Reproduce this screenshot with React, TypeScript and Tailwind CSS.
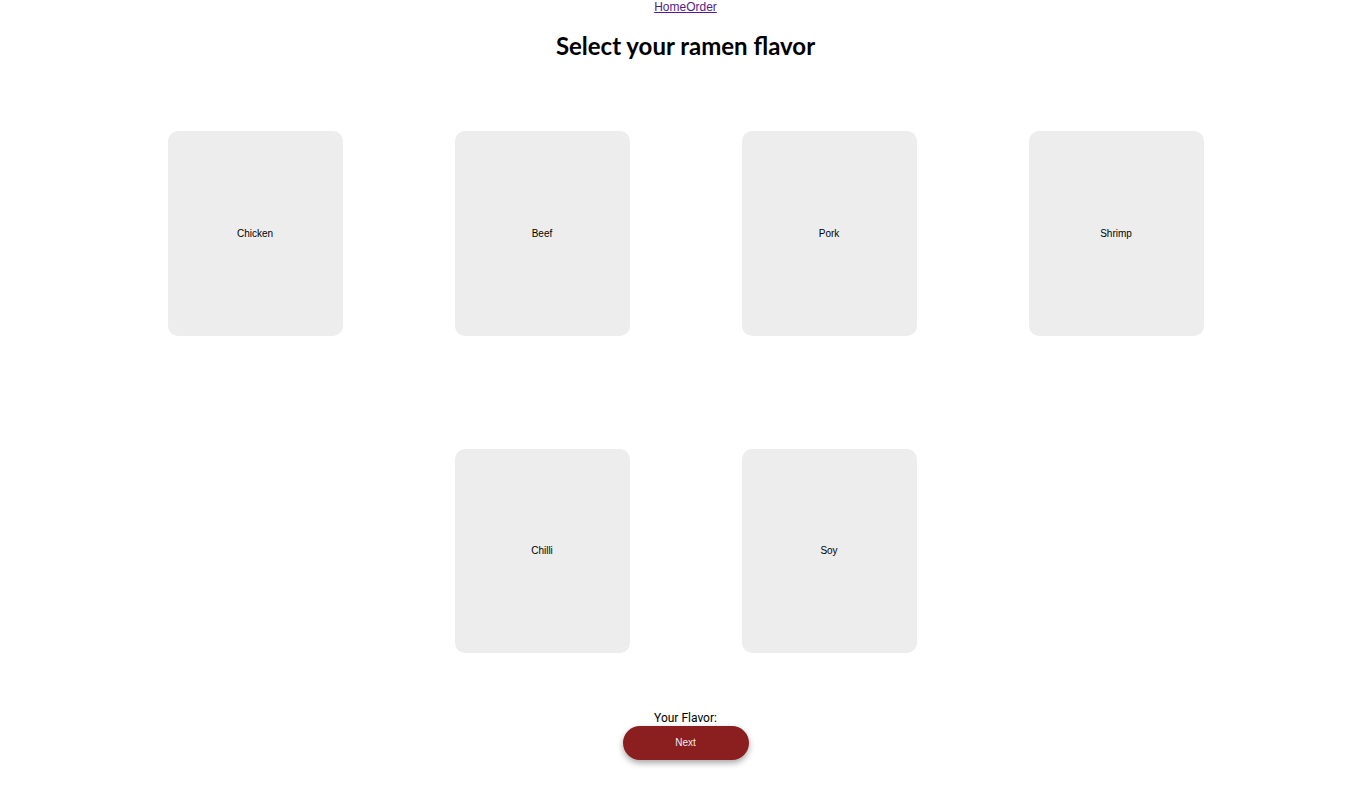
import React from "react";

const flavors = ["Chicken", "Beef", "Pork", "Shrimp", "Chilli", "Soy"];

export default function App() {
  return (
    <div className="min-h-screen bg-white text-black">
      <nav className="flex justify-center text-[12px] leading-[14px] font-['Liberation_Sans',Arial,sans-serif]">
        <a href="#" className="text-[#551a8b] underline">Home</a>
        <a href="#" className="text-[#551a8b] underline">Order</a>
      </nav>
      <h1 className="mt-[17px] text-center text-[24px] leading-[29px] font-bold font-['Lato',sans-serif]">
        Select your ramen flavor
      </h1>
      <div className="mt-[14.5px] flex flex-wrap justify-center px-[111px]">
        {flavors.map((f) => (
          <div
            key={f}
            className="mx-[56px] my-[56.5px] flex h-[204.5px] w-[175px] items-center justify-center rounded-[10px] bg-[#ededed] text-[10px] font-['Liberation_Sans',Arial,sans-serif]"
          >
            {f}
          </div>
        ))}
      </div>
      <div className="flex flex-col items-center">
        <p className="text-[12px] leading-[16px] font-['Roboto',sans-serif]">Your Flavor:</p>
        <button className="h-[34px] w-[126px] rounded-full bg-[#8b1e1e] text-[10px] text-[#eeeeee] shadow-[0_3px_6px_rgba(0,0,0,0.35)] font-['Liberation_Sans',Arial,sans-serif]">
          Next
        </button>
      </div>
    </div>
  );
}
